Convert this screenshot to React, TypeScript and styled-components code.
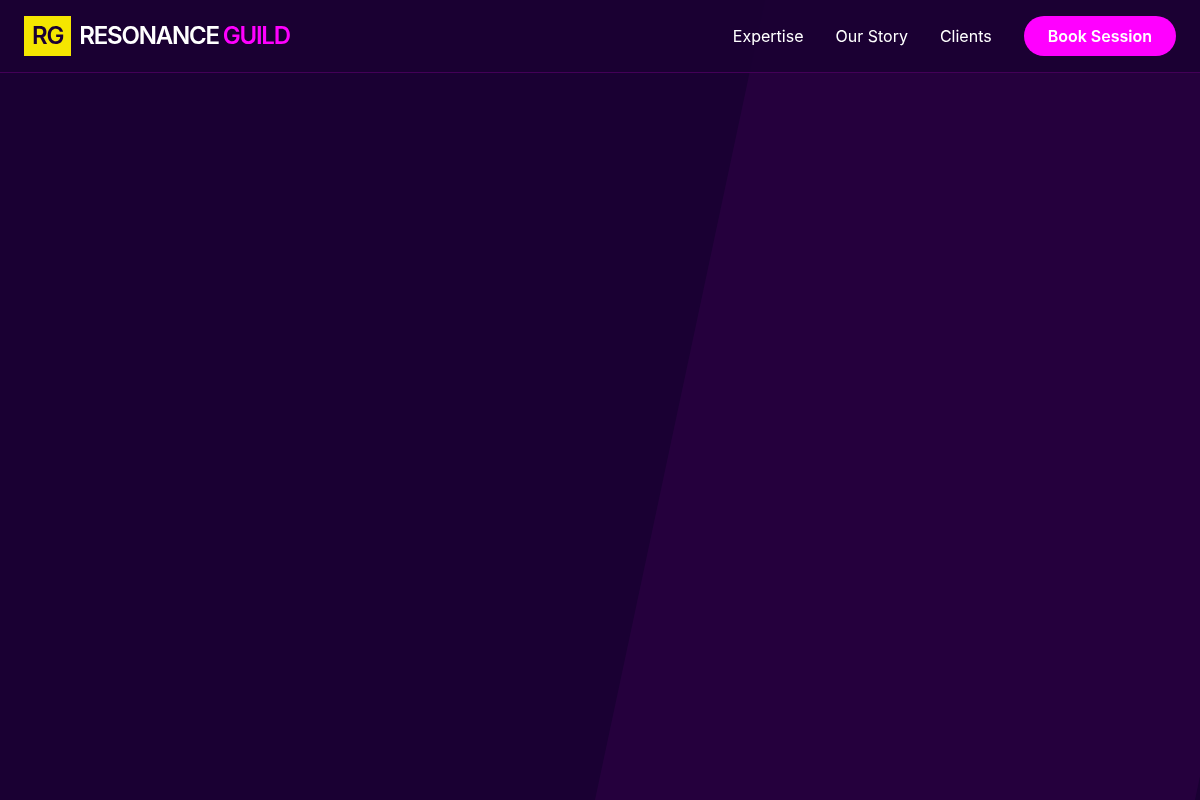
import React from 'react';
import styled, { createGlobalStyle } from 'styled-components';

const GlobalStyle = createGlobalStyle`
  *, *::before, *::after { box-sizing: border-box; }
  body {
    margin: 0;
    background: #1a0033;
    color: #fff;
    font-family: Inter, sans-serif;
    line-height: 1.5;
    overflow: hidden;
  }
`;

const Header = styled.header`
  position: fixed;
  top: 0;
  left: 0;
  right: 0;
  z-index: 10;
  display: flex;
  align-items: center;
  justify-content: space-between;
  height: 73px;
  padding: 16px 24px;
  background: rgba(26, 0, 51, 0.95);
  border-bottom: 1px solid rgba(255, 0, 255, 0.18);
`;

const Brand = styled.div`
  display: flex;
  align-items: center;
  gap: 8px;
  font-size: 24px;
  line-height: 32px;
  font-weight: 600;
  letter-spacing: -1.2px;
`;

const Monogram = styled.span`
  padding: 4px 8px;
  background: #f5e600;
  color: #1a0033;
`;

const Wordmark = styled.span`
  word-spacing: -1px;
`;

const Accent = styled.span`
  color: #f0f;
`;

const Nav = styled.nav`
  display: flex;
  align-items: center;
  gap: 32px;
`;

const NavLink = styled.a`
  font-size: 16px;
  line-height: 24px;
  color: #fff;
`;

const BookButton = styled.button`
  padding: 8px 24px;
  border: 0;
  border-radius: 999px;
  background: #f0f;
  color: #fff;
  font: 600 16px/24px Inter, sans-serif;
`;

const Hero = styled.main`
  position: relative;
  height: 100vh;
  overflow: hidden;
  background: #1a0033;
`;

const SlantedPanel = styled.div`
  position: absolute;
  top: 0;
  right: 0;
  width: 50%;
  height: 100%;
  background: rgba(255, 0, 255, 0.05);
  transform: skewX(-12deg) translateX(80px);
`;

const links = ['Expertise', 'Our Story', 'Clients'];

export default function App() {
  return (
    <>
      <GlobalStyle />
      <Header>
        <Brand>
          <Monogram>RG</Monogram>
          <Wordmark>RESONANCE <Accent>GUILD</Accent></Wordmark>
        </Brand>
        <Nav>
          {links.map((label) => (
            <NavLink key={label}>{label}</NavLink>
          ))}
          <BookButton>Book Session</BookButton>
        </Nav>
      </Header>
      <Hero>
        <SlantedPanel />
      </Hero>
    </>
  );
}
